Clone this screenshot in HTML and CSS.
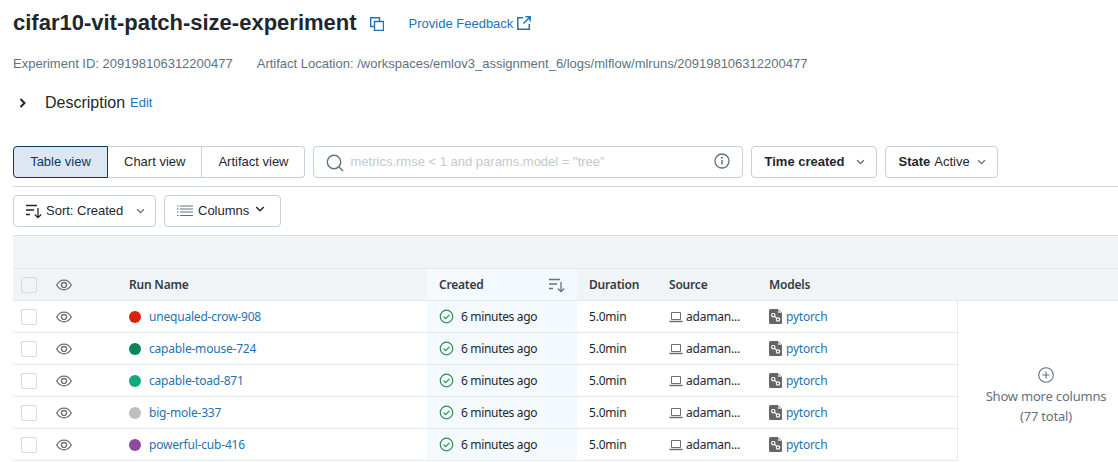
FILE: index.html
```html
<!DOCTYPE html>
<html lang="en">
<head>
<meta charset="utf-8">
<title>cifar10-vit-patch-size-experiment</title>
<link rel="stylesheet" href="styles.css">
</head>
<body>
<svg class="defs" width="0" height="0" aria-hidden="true">
  <symbol id="eye" viewBox="0 0 16 16"><path d="M.7 8c1.700-3.200 4.200-4.800 7.300-4.800s5.600 1.600 7.300 4.800c-1.700 3.200-4.200 4.800-7.300 4.800S2.400 11.200.7 8z" fill="none" stroke="currentColor" stroke-width="1.300"/><circle cx="8" cy="8" r="2.500" fill="none" stroke="currentColor" stroke-width="1.300"/></symbol>
  <symbol id="ok" viewBox="0 0 16 16"><circle cx="8" cy="8" r="6.700" fill="none" stroke="currentColor" stroke-width="1.300"/><path d="M4.900 8.200l2.200 2.200 4-4.200" fill="none" stroke="currentColor" stroke-width="1.300"/></symbol>
  <symbol id="laptop" viewBox="0 0 14 14"><path d="M2.500 2.500h9v7h-9z" fill="none" stroke="currentColor"/><path d="M.5 11.500h13" stroke="currentColor" stroke-width="1.500"/></symbol>
  <symbol id="model" viewBox="0 0 13 15"><path d="M1.500 0H9l4 4v9.500a1.500 1.500 0 0 1-1.500 1.500h-10A1.500 1.500 0 0 1 0 13.500v-12A1.500 1.500 0 0 1 1.500 0z" fill="currentColor"/><path d="M9 0v4h4z" fill="#c9c9c9"/><circle cx="4.300" cy="6.200" r="1.700" fill="none" stroke="#fff" stroke-width="1.200"/><circle cx="9" cy="10.500" r="1.700" fill="none" stroke="#fff" stroke-width="1.200"/><path d="M5.600 7.400l2.200 2" stroke="#fff" stroke-width="1.200"/></symbol>
  <symbol id="sort" viewBox="0 0 16 16"><path d="M0 2.500h11M0 7h8M0 11.500h4M12 5v9.500M8.800 11.500l3.200 3.200 3.200-3.200" fill="none" stroke="currentColor" stroke-width="1.300"/></symbol>
  <symbol id="chev" viewBox="0 0 10 6"><path d="M1.200 1l3.800 3.800L8.800 1" fill="none" stroke="currentColor" stroke-width="1.500"/></symbol>
</svg>

<header class="title-row">
  <h1 class="title">cifar10-vit-patch-size-experiment</h1>
  <svg class="copy" viewBox="0 0 14 14" width="14" height="14"><path d="M4.500 4.500h9v9h-9z M9.500 4.500V.7H.7v8.800h3.800" fill="none" stroke="currentColor" stroke-width="1.400"/></svg>
  <a class="feedback">Provide Feedback</a>
  <svg class="ext" viewBox="0 0 14 14" width="14" height="14"><path d="M6 1.700H.8v11.500h11.500V8M8.500.8h4.700v4.700M13 1L6.500 7.500" fill="none" stroke="currentColor" stroke-width="1.500"/></svg>
</header>

<div class="meta">
  <span>Experiment ID: 209198106312200477</span>
  <span>Artifact Location: /workspaces/emlov3_assignment_6/logs/mlflow/mlruns/209198106312200477</span>
</div>

<div class="desc">
  <svg class="desc-chev" viewBox="0 0 8 10" width="8" height="10"><path d="M1.500 1l4 4-4 4" fill="none" stroke="currentColor" stroke-width="2"/></svg>
  <span class="desc-label">Description</span>
  <a class="desc-edit">Edit</a>
</div>

<div class="toolbar">
  <div class="views">
    <span class="view view-on">Table view</span>
    <span class="view">Chart view</span>
    <span class="view">Artifact view</span>
  </div>
  <div class="search">
    <svg class="search-ico" viewBox="0 0 18 18" width="18" height="18"><circle cx="8" cy="8" r="6.700" fill="none" stroke="currentColor" stroke-width="1.400"/><path d="M13 13l4 4" stroke="currentColor" stroke-width="1.400"/></svg>
    <span class="search-ph">metrics.rmse &lt; 1 and params.model = "tree"</span>
    <svg class="info" viewBox="0 0 16 16" width="16" height="16"><circle cx="8" cy="8" r="7" fill="none" stroke="currentColor" stroke-width="1.300"/><path d="M8 7v4.500" stroke="currentColor" stroke-width="1.500"/><circle cx="8" cy="4.800" r="1" fill="currentColor"/></svg>
  </div>
  <button class="btn btn-time"><b>Time created</b><svg class="chev" width="9" height="6"><use href="#chev"/></svg></button>
  <button class="btn btn-state"><b>State</b> <span>Active</span><svg class="chev" width="9" height="6"><use href="#chev"/></svg></button>
</div>

<div class="controls">
  <button class="btn btn-sort"><svg class="ico-sort" width="16" height="16"><use href="#sort"/></svg><span>Sort: Created</span><svg class="chev" width="9" height="6"><use href="#chev"/></svg></button>
  <button class="btn btn-cols">
    <svg class="ico-cols" viewBox="0 0 16 12" width="16" height="12"><path d="M3 1h13M3 4h13M3 7h13M3 10.500h13M0 1h1.500M0 4h1.500M0 7h1.500M0 10.500h1.500" stroke="currentColor" stroke-width="1.200"/></svg>
    <span>Columns</span>
    <svg class="chev chev-dark" width="10" height="6"><use href="#chev"/></svg>
  </button>
</div>

<section class="table">
  <div class="band"></div>
  <div class="row head">
    <div class="c-check"><i class="box box-head"></i></div>
    <div class="c-eye"><svg class="eye" width="16" height="16"><use href="#eye"/></svg></div>
    <div class="c-name">Run Name</div>
    <div class="c-created">Created<svg class="ico-sort-head" width="16" height="16"><use href="#sort"/></svg></div>
    <div class="c-dur">Duration</div>
    <div class="c-src">Source</div>
    <div class="c-model">Models</div>
  </div>
  <div class="body">
    <div class="rows">
      <div class="row">
        <div class="c-check"><i class="box"></i></div>
        <div class="c-eye"><svg class="eye" width="16" height="16"><use href="#eye"/></svg></div>
        <div class="c-name"><i class="dot dot-red"></i><a>unequaled-crow-908</a></div>
        <div class="c-created"><svg class="ok" width="15" height="15"><use href="#ok"/></svg>6 minutes ago</div>
        <div class="c-dur">5.0min</div>
        <div class="c-src"><svg class="laptop" width="14" height="14"><use href="#laptop"/></svg>adaman...</div>
        <div class="c-model"><svg class="model" width="13" height="15"><use href="#model"/></svg><a>pytorch</a></div>
      </div>
      <div class="row">
        <div class="c-check"><i class="box"></i></div>
        <div class="c-eye"><svg class="eye" width="16" height="16"><use href="#eye"/></svg></div>
        <div class="c-name"><i class="dot dot-green"></i><a>capable-mouse-724</a></div>
        <div class="c-created"><svg class="ok" width="15" height="15"><use href="#ok"/></svg>6 minutes ago</div>
        <div class="c-dur">5.0min</div>
        <div class="c-src"><svg class="laptop" width="14" height="14"><use href="#laptop"/></svg>adaman...</div>
        <div class="c-model"><svg class="model" width="13" height="15"><use href="#model"/></svg><a>pytorch</a></div>
      </div>
      <div class="row">
        <div class="c-check"><i class="box"></i></div>
        <div class="c-eye"><svg class="eye" width="16" height="16"><use href="#eye"/></svg></div>
        <div class="c-name"><i class="dot dot-teal"></i><a>capable-toad-871</a></div>
        <div class="c-created"><svg class="ok" width="15" height="15"><use href="#ok"/></svg>6 minutes ago</div>
        <div class="c-dur">5.0min</div>
        <div class="c-src"><svg class="laptop" width="14" height="14"><use href="#laptop"/></svg>adaman...</div>
        <div class="c-model"><svg class="model" width="13" height="15"><use href="#model"/></svg><a>pytorch</a></div>
      </div>
      <div class="row">
        <div class="c-check"><i class="box"></i></div>
        <div class="c-eye"><svg class="eye" width="16" height="16"><use href="#eye"/></svg></div>
        <div class="c-name"><i class="dot dot-grey"></i><a>big-mole-337</a></div>
        <div class="c-created"><svg class="ok" width="15" height="15"><use href="#ok"/></svg>6 minutes ago</div>
        <div class="c-dur">5.0min</div>
        <div class="c-src"><svg class="laptop" width="14" height="14"><use href="#laptop"/></svg>adaman...</div>
        <div class="c-model"><svg class="model" width="13" height="15"><use href="#model"/></svg><a>pytorch</a></div>
      </div>
      <div class="row">
        <div class="c-check"><i class="box"></i></div>
        <div class="c-eye"><svg class="eye" width="16" height="16"><use href="#eye"/></svg></div>
        <div class="c-name"><i class="dot dot-purple"></i><a>powerful-cub-416</a></div>
        <div class="c-created"><svg class="ok" width="15" height="15"><use href="#ok"/></svg>6 minutes ago</div>
        <div class="c-dur">5.0min</div>
        <div class="c-src"><svg class="laptop" width="14" height="14"><use href="#laptop"/></svg>adaman...</div>
        <div class="c-model"><svg class="model" width="13" height="15"><use href="#model"/></svg><a>pytorch</a></div>
      </div>
    </div>
    <aside class="more">
      <svg class="plus" viewBox="0 0 16 16" width="16" height="16"><circle cx="8" cy="8" r="7.300" fill="none" stroke="currentColor" stroke-width="1.100"/><path d="M8 4.500v7M4.500 8h7" stroke="currentColor" stroke-width="1.100"/></svg>
      <span>Show more columns</span>
      <span>(77 total)</span>
    </aside>
  </div>
</section>
</body>
</html>
```

FILE: styles.css
```css
* { box-sizing: border-box; }
html, body { margin: 0; height: 462px; overflow: hidden; }
body {
  padding-left: 13px;
  background: #fff;
  color: #1f272d;
  font: 13px/20px "Liberation Sans", Arial, sans-serif;
}
a { color: #2272b4; }
.defs { display: block; height: 0; }

.title-row { display: flex; align-items: center; height: 45px; }
.title { margin: 0; font-size: 22px; line-height: 28px; font-weight: 700; }
.copy { margin: 2px 0 0 13px; color: #2272b4; }
.feedback { margin: 3px 0 0 25px; }
.ext { margin: 0 0 0 4px; color: #2272b4; }

.meta { display: flex; gap: 24px; margin-top: 9px; color: #5f7281; height: 20px; }

.desc { display: flex; align-items: center; height: 20px; margin-top: 19px; }
.desc-chev { margin-left: 6px; color: #1f272d; }
.desc-label { margin-left: 18px; font-size: 16px; }
.desc-edit { margin-left: 5px; }

.toolbar { display: flex; margin-top: 33px; padding-bottom: 8px; border-bottom: 1px solid #d1d9e1; gap: 8px; }
.views { display: flex; height: 32px; }
.view {
  display: flex; align-items: center; justify-content: center;
  border: 1px solid #c4d0dc; border-left: 0; padding: 0 16px; height: 32px;
}
.view:last-child { border-radius: 0 4px 4px 0; padding-right: 15px; }
.view-on { width: 95px; padding: 0; border: 1px solid #0e3a5e; border-radius: 4px 0 0 4px; background: #dce7f3; color: #0e3a5e; }
.search {
  display: flex; align-items: center; width: 430px; height: 32px;
  border: 1px solid #c4d0dc; border-radius: 4px; padding: 0 12px;
}
.search-ico { color: #5f7281; margin-top: 2px; }
.search-ph { margin-left: 7px; color: #c2c9d0; flex: 1; }
.info { color: #5f7281; margin-top: -2px; margin-right: 0; }
.btn {
  display: flex; align-items: center; height: 32px; padding: 0 12px;
  border: 1px solid #c4d0dc; border-radius: 4px; background: #fff; color: #1f272d;
  font: inherit; white-space: nowrap;
}
.btn-time { width: 126px; padding-left: 13px; }
.btn-time .chev { margin-left: 12px; }
.btn-state { width: 113px; padding-left: 13px; }
.btn-state span { margin-left: 4px; }
.btn-state .chev { margin-left: 7px; }
.chev { color: #5f7281; flex: none; }
.chev-dark { color: #1f272d; margin: -4px 0 0 6px; }

.controls { display: flex; gap: 8px; margin-top: 8px; }
.btn-sort { width: 143px; padding-right: 0; }
.ico-sort { color: #1f272d; margin-right: 4px; flex: none; }
.btn-sort .chev { margin-left: 13px; }
.btn-cols { width: 117px; padding-left: 12px; }
.ico-cols { color: #5f7281; margin-right: 5px; flex: none; }

.table { margin-top: 8px; }
.band { height: 34px; background: #f1f4f7; border-top: 1px solid #d8e0e7; border-bottom: 1px solid #e4e9ee; }
.row {
  display: grid;
  grid-template-columns: 44px 72px 298px 150px 80px 100px 188px;
  height: 32px;
  border-bottom: 1px solid #e4e9ee;
  align-items: stretch;
  font-family: "Noto Sans", sans-serif;
  font-size: 12px;
  letter-spacing: -0.2px;
}
.row > div { display: flex; align-items: center; white-space: nowrap; }
.head { background: #f1f4f7; font-weight: 600; color: #333c44; }
.body { display: flex; }
.rows { width: 945px; border-right: 1px solid #e4e9ee; flex: none; }
.c-check { padding-left: 8px; }
.c-eye { margin-left: -1px; }
.row > .c-created { padding-left: 12px; background: #f4f9fe; letter-spacing: -0.33px; }
.head > .c-created { background: #f4f9fe; letter-spacing: -0.2px; }
.c-dur { padding-left: 12px; }
.c-src { padding-left: 12px; }
.c-model { padding-left: 12px; }
.box { display: block; width: 16px; height: 16px; border: 1px solid #d3dde6; border-radius: 2px; background: #fff; }
.box-head { background: #f1f4f7; }
.eye { color: #67727c; }
.dot { display: block; width: 12px; height: 12px; border-radius: 50%; margin-right: 8px; }
.dot-red { background: #d8220f; }
.dot-green { background: #07855a; }
.dot-teal { background: #0dab79; }
.dot-grey { background: #bfbfbf; }
.dot-purple { background: #8d4a9e; }
.ok { color: #2f8a55; margin-right: 7px; }
.ico-sort-head { color: #67727c; margin-left: auto; margin-right: 12px; }
.laptop { color: #6f6f6f; margin-right: 3px; }
.model { color: #666; margin-right: 4px; flex: none; }
.more {
  flex: none; width: 176px; padding-top: 30px;
  display: flex; flex-direction: column; align-items: center; justify-content: center;
  font-family: "Noto Sans", sans-serif; font-size: 13px; letter-spacing: -0.2px; line-height: 20px; color: #5f7281;
  white-space: nowrap;
}
.plus { margin-bottom: 3px; color: #5f7281; }
```
